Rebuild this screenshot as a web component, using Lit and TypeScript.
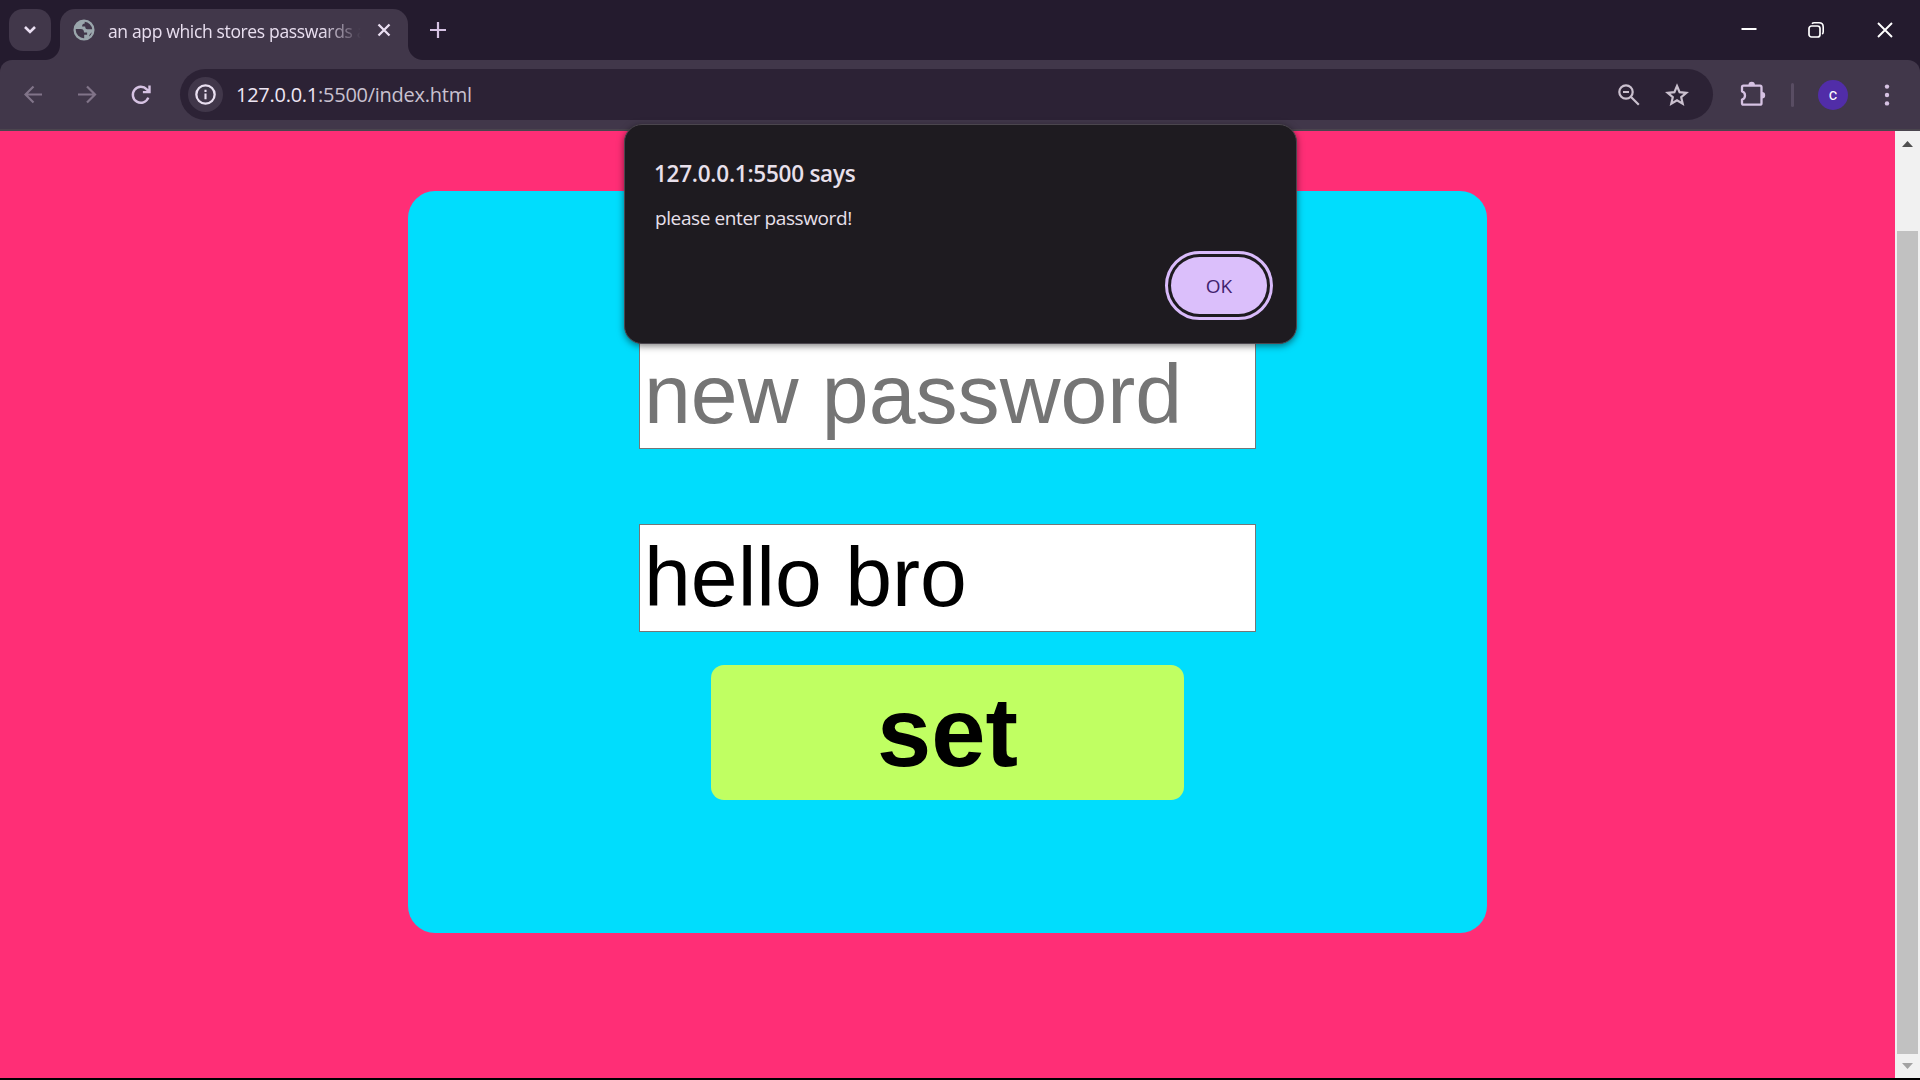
import { LitElement, html, css } from "lit";
import { customElement } from "lit/decorators.js";

@customElement("tab-strip")
class TabStrip extends LitElement {
  static styles = css`
    :host { display: flex; height: 60px; box-sizing: border-box; padding: 9px 0 0 9px; background: #241b2e; }
    .search { width: 42px; height: 42px; border-radius: 14px; background: #41374a; display: grid; place-items: center; }
    .tab { position: relative; box-sizing: border-box; margin-left: 9px; width: 348px; height: 51px; padding: 0 0 9px 13px; display: flex; align-items: center; background: #41374a; border-radius: 15px 15px 0 0; }
    .tab::before, .tab::after { content: ""; position: absolute; bottom: 0; width: 15px; height: 15px; }
    .tab::before { left: -15px; background: radial-gradient(circle at 0 0, transparent 14.5px, #41374a 15.5px); }
    .tab::after { right: -15px; background: radial-gradient(circle at 100% 0, transparent 14.5px, #41374a 15.5px); }
    .title { margin-left: 13px; width: 260px; margin-top: 2px; flex: none; font: 17.5px/24px "Open Sans", sans-serif; letter-spacing: -0.35px; color: #e9dff0; white-space: nowrap; -webkit-mask-image: linear-gradient(90deg, #000 215px, transparent 253px); mask-image: linear-gradient(90deg, #000 215px, transparent 253px); }
    .close { margin-left: 9px; }
    .plus { margin: 13px 0 0 22px; }
    svg { display: block; flex: none; }
    .controls { margin-left: auto; display: flex; padding: 13px 27px 0 0; gap: 53px; }
    .controls svg:first-child { margin-right: -2px; }
  `;
  render() {
    return html`
      <div class="search"><svg width="14" height="10" viewBox="0 0 14 10"><path d="M2 2l5 5 5-5" fill="none" stroke="#eadff2" stroke-width="2.6"/></svg></div>
      <div class="tab">
        <svg width="22" height="22" viewBox="0 0 24 24"><path fill="#9aa6ac" d="M12 .5a11.5 11.5 0 1 0 0 23 11.5 11.5 0 0 0 0-23zM3 12c0-.5 0-.8.1-1.2h5.4c2.6 0 3.5 1.4 3.5 4h3.4v2.4h-3.200v3.700A9 9 0 0 1 3 12zm14.500 7.100c.3-1.700 1.300-2.900 3.200-4.600A9 9 0 0 1 17.500 19.100zM20.900 11.200h-5.200c-1.800 0-2.400-1.100-2.400-2.900H9.900c0-2.400 1.100-3.500 2.900-3.500V3.100a9 9 0 0 1 8.100 8.100z"/></svg>
        <div class="title">an app which stores passwards a</div>
        <svg class="close" width="14" height="14" viewBox="0 0 14 14"><path d="M1.500 1.500l11 11m0-11l-11 11" stroke="#eadff2" stroke-width="2.300"/></svg>
      </div>
      <svg class="plus" width="16" height="16" viewBox="0 0 16 16"><path d="M8 0v16M0 8h16" stroke="#d6c2e3" stroke-width="2.200"/></svg>
      <div class="controls">
        <svg width="16" height="16" viewBox="0 0 16 16"><path d="M.5 7h15" stroke="#fff" stroke-width="2"/></svg>
        <svg width="16" height="16" viewBox="0 0 16 16"><rect x="1" y="4" width="11" height="11" rx="2.500" fill="none" stroke="#fff" stroke-width="1.700"/><path d="M4 1.800C4.600 1 5.300.8 6.200.8H11c2.600 0 4.200 1.600 4.200 4.200v4.800c0 .9-.2 1.600-1 2.200" fill="none" stroke="#fff" stroke-width="1.600"/></svg>
        <svg width="16" height="16" viewBox="0 0 16 16"><path d="M1 1l14 14M15 1L1 15" stroke="#fff" stroke-width="1.900"/></svg>
      </div>`;
  }
}

@customElement("tool-bar")
class ToolBar extends LitElement {
  static styles = css`
    :host { display: block; height: 71px; background: #241b2e; }
    .bar { box-sizing: border-box; height: 71px; padding: 0 27px 0 24px; display: flex; align-items: center; background: #41374a; border-bottom: 2px solid #4a454e; border-radius: 12px 12px 0 0; }
    svg { display: block; flex: none; }
    .nav { display: flex; gap: 35px; width: 156px; }
    .nav svg:last-child { margin-left: -1px; }
    .address { width: 1533px; height: 51px; box-sizing: border-box; border-radius: 26px; background: #2c2235; display: flex; align-items: center; padding: 0 24px 0 8px; }
    .info { width: 35px; height: 35px; border-radius: 50%; background: #41374a; display: grid; place-items: center; }
    .url { margin-left: 13px; font: 20px/28px "Open Sans", sans-serif; letter-spacing: -0.26px; color: #c9c1d0; white-space: nowrap; }
    .host { color: #eee6f4; }
    .zoom { margin-left: auto; }
    .star { margin-left: 25px; }
    .puzzle { margin-left: 26px; }
    .sep { width: 3px; height: 24px; border-radius: 2px; margin-left: 25px; background: #594d63; }
    .avatar { width: 30px; height: 30px; border-radius: 50%; margin-left: 24px; background: #512da8; color: #fff; display: grid; place-items: center; font: 400 16px/30px Roboto, sans-serif; }
    .dots { margin-left: auto; }
  `;
  render() {
    return html`<div class="bar">
      <div class="nav">
        <svg width="19" height="19" viewBox="0 0 19 19"><path d="M18 9.500H2M9.500 1.500l-8 8 8 8" fill="none" stroke="#817489" stroke-width="2.200"/></svg>
        <svg width="19" height="19" viewBox="0 0 19 19"><path d="M0 9.500h16.500M9 1.500l8 8-8 8" fill="none" stroke="#817489" stroke-width="2.200"/></svg>
        <svg width="20" height="20" viewBox="0 0 20 20"><path d="M17.300 12.600A8 8 0 1 1 15.800 4.400L18 6.600M18.500.5v6.600h-6.600" fill="none" stroke="#d6c2e3" stroke-width="2.400"/></svg>
      </div>
      <div class="address">
        <div class="info"><svg width="21" height="21" viewBox="0 0 22 22"><circle cx="11" cy="11" r="9.600" fill="none" stroke="#e9dff0" stroke-width="2.400"/><path d="M11 10v6M11 6v2.300" stroke="#e9dff0" stroke-width="2.200"/></svg></div>
        <div class="url"><span class="host">127.0.0.1</span>:5500/index.html</div>
        <svg class="zoom" width="22" height="22" viewBox="0 0 22 22"><g fill="none" stroke="#cac0ce" stroke-width="2.200"><circle cx="8" cy="8" r="6.700"/><path d="M12.800 12.800l8 8M5 8h6"/></g></svg>
        <svg class="star" width="24" height="24" viewBox="0 0 24 24"><path fill="none" stroke="#cac0ce" stroke-width="2.200" d="M12 3l2.600 6.200 6.700.6-5.100 4.400 1.500 6.500L12 17.200l-5.700 3.500 1.500-6.500-5.100-4.400 6.700-.6z"/></svg>
      </div>
      <svg class="puzzle" width="27" height="27" viewBox="0 0 27 27"><path d="M4.500 4.700h16.500q1.500 0 1.500 1.500v16q0 1.500-1.500 1.500H4.500q-1.500 0-1.500-1.500v-3.700a4.300 4.300 0 0 0 0-8.200V6.200Q3 4.700 4.500 4.700z" fill="none" stroke="#d6c2e3" stroke-width="2.300" stroke-linejoin="round"/><path d="M9.500 4a3.200 3.200 0 0 1 6.400 0zM23 11a3.200 3.200 0 0 1 0 6.400z" fill="#d6c2e3"/></svg>
      <div class="sep"></div>
      <div class="avatar">c</div>
      <svg class="dots" width="12" height="22" viewBox="0 0 12 22"><g fill="#d6c2e3"><circle cx="6" cy="2.600" r="2.200"/><circle cx="6" cy="11" r="2.200"/><circle cx="6" cy="19.400" r="2.200"/></g></svg>
    </div>`;
  }
}

@customElement("alert-dialog")
class AlertDialog extends LitElement {
  static styles = css`
    :host { box-sizing: border-box; display: flex; flex-direction: column; width: 673px; height: 220px; padding: 33px 23px 23px 29px; background: #1e1b20; border: 1px solid #4b464e; border-radius: 18px; box-shadow: 0 2px 7px rgba(0,0,0,.5); font-family: "Open Sans", sans-serif; color: #e8e0eb; }
    .title { font-size: 22.5px; line-height: 32px; font-weight: 600; letter-spacing: -0.25px; }
    .text { margin-top: 14px; margin-left: 1px; font-size: 19px; line-height: 28px; letter-spacing: -0.4px; }
    .ok { align-self: flex-end; margin-top: auto; box-sizing: border-box; width: 108px; height: 69px; padding: 3px; border: 3px solid #d9bbfb; border-radius: 35px; }
    .face { display: grid; place-items: center; height: 57px; border-radius: 29px; background: #dbbffb; color: #41226e; font-size: 19px; font-weight: 500; }
  `;
  render() {
    return html`<div class="title">127.0.0.1:5500 says</div>
      <div class="text">please enter password!</div>
      <div class="ok"><div class="face">OK</div></div>`;
  }
}

@customElement("app-root")
class AppRoot extends LitElement {
  static styles = css`
    :host { display: flex; flex-direction: column; position: relative; width: 1920px; height: 1080px; overflow: hidden; background: #000; }
    .view { display: flex; height: 947px; }
    .page { flex: 1; background: #ff2e76; padding: 60px 408px 0; font-family: "Liberation Sans", Arial, sans-serif; }
    .card { box-sizing: border-box; height: 742px; border-radius: 27px; background: #00ddfd; display: flex; flex-direction: column; align-items: center; padding-top: 150px; }
    .field { box-sizing: border-box; width: 617px; height: 108px; border: 1px solid #767676; background: #fff; padding: 4px 4px; font-size: 84.2px; line-height: 97px; white-space: nowrap; color: #000; }
    .empty { color: #757575; margin-bottom: 75px; }
    .set { margin-top: 33px; width: 473px; height: 135px; border-radius: 13px; background: #c0ff62; text-align: center; font-weight: 700; font-size: 97.5px; line-height: 136px; }
    .scroll { width: 25px; box-sizing: border-box; background: #f1f1f1; display: flex; flex-direction: column; align-items: center; padding: 10px 0 8px; }
    .thumb { width: 21px; height: 823px; margin: 84px 0 9px; background: #c1c1c1; }
    svg { display: block; flex: none; }
    alert-dialog { position: absolute; left: 624px; top: 124px; }
  `;
  render() {
    return html`<tab-strip></tab-strip><tool-bar></tool-bar>
      <div class="view">
        <div class="page"><div class="card">
          <div class="field empty">new password</div>
          <div class="field">hello bro</div>
          <div class="set">set</div>
        </div></div>
        <div class="scroll">
          <svg width="11" height="6" viewBox="0 0 11 6"><path d="M5.500 0L11 6H0z" fill="#505050"/></svg>
          <div class="thumb"></div>
          <svg width="11" height="6" viewBox="0 0 11 6"><path d="M0 0h11L5.500 6z" fill="#a3a3a3"/></svg>
        </div>
      </div>
      <alert-dialog></alert-dialog>`;
  }
}
